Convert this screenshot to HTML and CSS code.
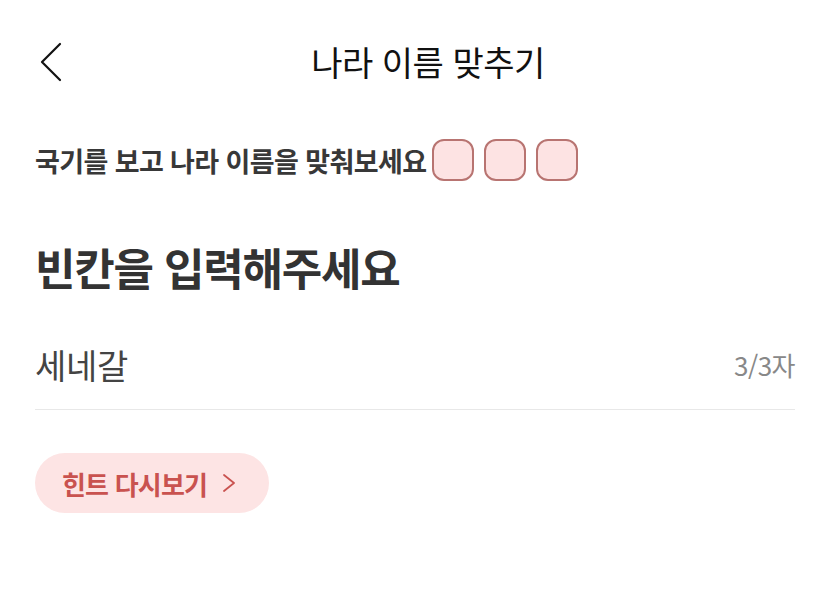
FILE: index.html
```html
<!DOCTYPE html>
<html lang="ko">
<head>
<meta charset="utf-8">
<link rel="stylesheet" href="styles.css">
</head>
<body>
<div class="screen">
  <header class="topbar">
    <button class="back" aria-label="뒤로">
      <svg width="24" height="40" viewBox="0 0 24 40"><path d="M20 2 L2 20 L20 38" fill="none" stroke="#111" stroke-width="2.2" stroke-linecap="round" stroke-linejoin="round"/></svg>
    </button>
    <h1 class="title">나라 이름 맞추기</h1>
  </header>
  <main class="content">
    <div class="question">
      <span class="question-text">국기를 보고 나라 이름을 맞춰보세요</span>
      <span class="slots">
        <span class="slot"></span><span class="slot"></span><span class="slot"></span>
      </span>
    </div>
    <h2 class="heading">빈칸을 입력해주세요</h2>
    <div class="field">
      <span class="value">세네갈</span>
      <span class="count">3/3자</span>
    </div>
    <button class="hint">힌트 다시보기
      <svg width="14" height="18" viewBox="0 0 14 18"><path d="M2 1 L12 9 L2 17" fill="none" stroke="#c9524f" stroke-width="1.8" stroke-linecap="round" stroke-linejoin="round"/></svg>
    </button>
  </main>
</div>
</body>
</html>
```
FILE: styles.css
```css
* { box-sizing: border-box; }
html, body { margin: 0; padding: 0; background: #fff; }
body {
  font-family: "Noto Sans CJK KR", "Noto Sans", sans-serif;
  color: #222;
}
.screen { width: 830px; height: 604px; overflow: hidden; }
.topbar {
  position: relative;
  height: 124px;
  display: flex;
  align-items: center;
  justify-content: center;
}
.back {
  position: absolute;
  left: 40px;
  top: 42px;
  padding: 0;
  border: 0;
  background: none;
  display: flex;
}
.title {
  margin: 0;
  font-size: 34px;
  font-weight: 400;
  color: #111;
  letter-spacing: -0.5px;
  line-height: 1;
  padding-left: 26px;
}
.content { padding: 0 35px; }
.question {
  display: flex;
  align-items: center;
  height: 44px;
  margin-top: 14px;
}
.question-text {
  font-size: 27px;
  font-weight: 700;
  color: #383838;
  letter-spacing: -0.6px;
  margin-right: 6px;
}
.slots { display: flex; gap: 10px; }
.slot {
  width: 42px;
  height: 42px;
  border: 2px solid #b87471;
  border-radius: 12px;
  background: #fde3e3;
}
.heading {
  margin: 63px 0 0;
  font-size: 44px;
  font-weight: 700;
  color: #333;
  letter-spacing: -1.2px;
  line-height: 1;
}
.field {
  margin-top: 49px;
  height: 72px;
  display: flex;
  justify-content: space-between;
  align-items: flex-start;
  border-bottom: 1.5px solid #e8e8e8;
}
.value {
  font-size: 34px;
  color: #444;
  letter-spacing: -0.3px;
  line-height: 1;
  padding-top: 10px;
}
.count {
  font-size: 26px;
  color: #888;
  line-height: 1;
  padding-top: 14px;
  letter-spacing: -0.5px;
}
.hint {
  margin-top: 43px;
  height: 60px;
  padding: 0 33px 0 27px;
  border: 0;
  border-radius: 30px;
  background: #fde4e4;
  color: #c9524f;
  font-family: inherit;
  font-size: 26px;
  font-weight: 700;
  letter-spacing: -0.8px;
  display: flex;
  align-items: center;
  gap: 15px;
}
```
